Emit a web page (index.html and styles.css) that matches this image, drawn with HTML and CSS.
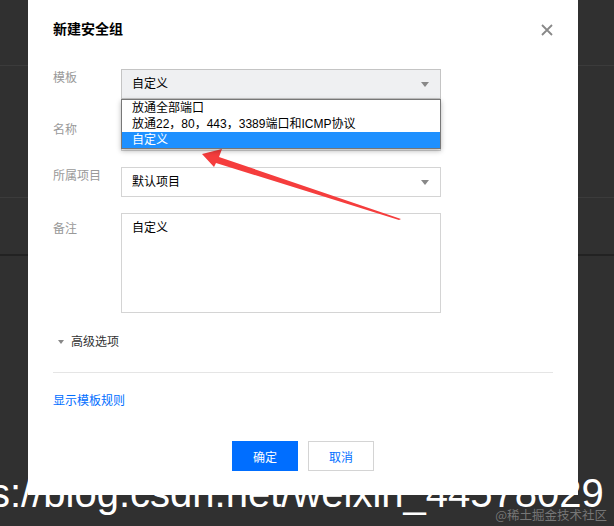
FILE: index.html
```html
<!DOCTYPE html>
<html lang="zh-CN">

<head>
    <meta charset="UTF-8">
    <meta name="viewport" content="width=device-width, initial-scale=1.0">
    <title>新建安全组</title>
    <link rel="stylesheet" href="styles.css">
</head>

<body>
    <div class="dialog">
        <header class="dialog-head">
            <h3>新建安全组</h3>
            <button class="close" aria-label="关闭">
                <svg width="12" height="12" viewBox="0 0 12 12">
                    <path d="M1 1 L11 11 M11 1 L1 11" stroke="#888" stroke-width="1.8" fill="none" />
                </svg>
            </button>
        </header>

        <div class="form">
            <div class="row row-first">
                <label>模板</label>
                <div class="control">
                    <div class="select open">自定义</div>
                    <ul class="options">
                        <li>放通全部端口</li>
                        <li>放通22，80，443，3389端口和ICMP协议</li>
                        <li class="selected">自定义</li>
                    </ul>
                </div>
            </div>
            <div class="row">
                <label>名称</label>
                <div class="control">
                    <div class="input"></div>
                </div>
            </div>
            <div class="row">
                <label>所属项目</label>
                <div class="control">
                    <div class="select">默认项目</div>
                </div>
            </div>
            <div class="row">
                <label class="label-tall">备注</label>
                <div class="control">
                    <div class="textarea">自定义</div>
                </div>
            </div>
        </div>

        <div class="advanced"><span class="caret"></span>高级选项</div>
        <div class="divider"></div>
        <a class="link" href="#">显示模板规则</a>

        <footer class="dialog-foot">
            <button class="btn btn-primary">确定</button>
            <button class="btn">取消</button>
        </footer>
    </div>

    <svg class="mark-arrow" width="614" height="526" viewBox="0 0 614 526">
        <polygon points="202,154 222,149 219,157 401,219 399,220 216,163 214,167" fill="#f53d3d" />
    </svg>

    <div class="url-mark">s://blog.csdn.net/weixin_44578029</div>
    <div class="site-mark">@稀土掘金技术社区</div>
</body>

</html>
```

FILE: styles.css
```css
/* Estilos gerais */
body {
    margin: 0;
    padding: 0;
    position: relative;
    height: 526px;
    overflow: hidden;
    font-family: "Liberation Sans", "Noto Sans CJK SC", sans-serif;
    font-size: 12px;
    color: #000;
    background-color: #303030;
    background-image:
        linear-gradient(#3b3b3b, #3b3b3b),
        linear-gradient(#3b3b3b, #3b3b3b),
        linear-gradient(#222, #222);
    background-size: 100% 1px, 100% 1px, 100% 2px;
    background-position: 0 65px, 0 197px, 0 254px;
    background-repeat: no-repeat;
}

/* Janela */
.dialog {
    margin-left: 28px;
    width: 550px;
    height: 495px;
    box-sizing: border-box;
    padding: 19px 25px 24px;
    background-color: #fff;
}

.dialog-head {
    display: flex;
    justify-content: space-between;
    align-items: center;
    height: 20px;
}

.dialog-head h3 {
    margin: 0;
    font-size: 14px;
    line-height: 20px;
    font-weight: bold;
}

.close {
    border: none;
    background: none;
    padding: 0;
    width: 12px;
    height: 12px;
    margin-top: 2px;
    display: flex;
}

/* Formulario */
.form {
    margin-top: 30px;
}

.row {
    display: flex;
    margin-top: 16px;
}

.row.row-first {
    margin-top: 0;
    margin-bottom: 22px;
}

.row label {
    width: 68px;
    flex: none;
    line-height: 18px;
    color: #999;
}

.row label.label-tall {
    padding-top: 7px;
}

.control {
    position: relative;
    width: 320px;
}

.select,
.input {
    height: 30px;
    box-sizing: border-box;
    border: 1px solid #d4d4d4;
    padding: 0 10px;
    line-height: 28px;
    position: relative;
}

.select::after {
    content: "";
    position: absolute;
    right: 11px;
    top: 12px;
    border-left: 4px solid transparent;
    border-right: 4px solid transparent;
    border-top: 5px solid #888;
}

.select.open {
    background-color: #eff0f2;
    border-color: #c4c4c4;
}

.options {
    position: absolute;
    left: 0;
    top: 30px;
    width: 320px;
    box-sizing: border-box;
    margin: 0;
    padding: 0;
    list-style: none;
    background-color: #fff;
    border: 1px solid #777;
    box-shadow: 0 2px 5px rgba(0, 0, 0, 0.28);
    z-index: 2;
}

.options li {
    height: 16px;
    line-height: 16px;
    padding-left: 10px;
}

.options li.selected {
    background-color: #1e90ff;
    color: #fff;
}

.textarea {
    height: 100px;
    box-sizing: border-box;
    border: 1px solid #d4d4d4;
    padding: 6px 10px;
    line-height: 16px;
}

/* Rodape da janela */
.advanced {
    margin-top: 20px;
    display: flex;
    align-items: center;
    line-height: 18px;
    color: #333;
}

.caret {
    margin: 0 7px 0 5px;
    border-left: 3px solid transparent;
    border-right: 3px solid transparent;
    border-top: 4px solid #888;
}

.divider {
    margin-top: 21px;
    height: 1px;
    background-color: #e5e5e5;
}

.link {
    display: block;
    margin-top: 19px;
    line-height: 18px;
    color: #006eff;
    text-decoration: none;
}

.dialog-foot {
    margin-top: 31px;
    display: flex;
    justify-content: center;
    gap: 10px;
}

.btn {
    width: 66px;
    height: 30px;
    box-sizing: border-box;
    border: 1px solid #d4d4d4;
    background-color: #fff;
    color: #006eff;
    font-family: inherit;
    font-size: 12px;
    padding: 0;
}

.btn.btn-primary {
    background-color: #006eff;
    border-color: #006eff;
    color: #fff;
}

/* Marcas sobre a captura */
.mark-arrow {
    position: absolute;
    left: 0;
    top: 0;
    pointer-events: none;
}

.url-mark {
    position: absolute;
    left: -10px;
    top: 473px;
    font-family: "Liberation Sans", Arial, sans-serif;
    font-size: 40px;
    line-height: 40px;
    color: #fff;
    white-space: nowrap;
}

.site-mark {
    position: absolute;
    right: 7px;
    top: 506px;
    font-family: "Noto Sans CJK SC", sans-serif;
    font-size: 12.5px;
    line-height: 18px;
    color: rgba(150, 150, 150, 0.7);
    white-space: nowrap;
}
```
